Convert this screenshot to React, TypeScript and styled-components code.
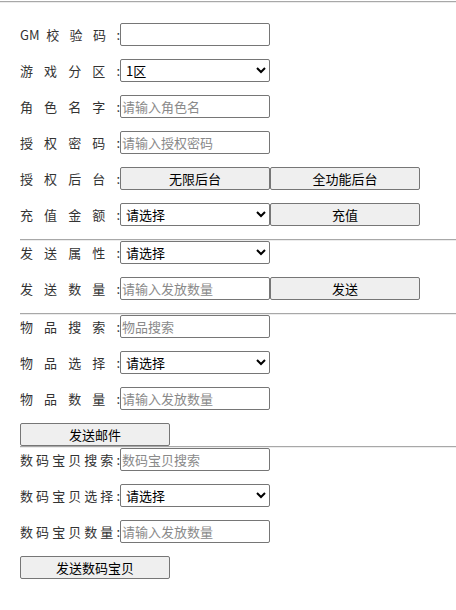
import React from "react";
import styled, { createGlobalStyle } from "styled-components";

const Global = createGlobalStyle`
  html, body { margin: 0; padding: 0; background: #fff; }
  body { font-family: "Microsoft YaHei", "Noto Sans CJK SC", "Noto Sans", sans-serif; font-size: 13px; color: #333; }
`;

const Page = styled.div`
  width: 456px;
  padding-top: 1px;
`;

const Rule = styled.hr<{ $inset?: boolean }>`
  margin: 0 0 0 ${(p) => (p.$inset ? "20px" : "0")};
  height: 0;
  border: 0;
  border-top: 1px solid #a8a8a8;
  border-bottom: 1px solid #ececec;
`;

const Body = styled.div`
  padding: 20px 0 0 0;
`;

const Section = styled.div`
  padding-left: 20px;
  display: flex;
  flex-direction: column;
`;

const Row = styled.div<{ $tight?: boolean }>`
  display: flex;
  align-items: center;
  height: 23px;
  margin-bottom: ${(p) => (p.$tight ? "0" : "13px")};
`;

const Label = styled.label`
  display: inline-block;
  width: 100px;
  text-align: justify;
  text-align-last: justify;
  font-size: 13px;
  line-height: 23px;
  color: #333;
  white-space: nowrap;
`;

const fieldBase = `
  box-sizing: border-box;
  width: 150px;
  height: 23px;
  font-family: "Microsoft YaHei", "Noto Sans CJK SC", sans-serif;
  font-size: 13px;
  border: 1px solid #767676;
  border-radius: 2px;
  margin: 0;
`;

const TextInput = styled.input`
  ${fieldBase}
  padding: 1px 1px;
  color: #000;
  background: #fff;
  &::placeholder { color: #8a8a8a; }
`;

const Select = styled.select`
  ${fieldBase}
  padding: 0 0 0 1px;
  color: #000;
  background-color: #fff;
`;

const Button = styled.button`
  ${fieldBase}
  background: #efefef;
  color: #000;
  padding: 0;
  cursor: pointer;
`;

type Field =
  | { kind: "input"; placeholder?: string }
  | { kind: "select"; options: string[] }
  | { kind: "button"; text: string };

const LabelRow: React.FC<{ label: string; fields: Field[]; tight?: boolean }> = ({ label, fields, tight }) => (
  <Row $tight={tight}>
    <Label>{label}</Label>
    {fields.map((f, i) => {
      if (f.kind === "input") return <TextInput key={i} placeholder={f.placeholder} />;
      if (f.kind === "select")
        return (
          <Select key={i} defaultValue={f.options[0]}>
            {f.options.map((o) => (
              <option key={o}>{o}</option>
            ))}
          </Select>
        );
      return <Button key={i}>{f.text}</Button>;
    })}
  </Row>
);

export default function App() {
  return (
    <Page>
      <Global />
      <Rule />
      <Body>
        <Section>
          <LabelRow label="GM 校 验 码 :" fields={[{ kind: "input" }]} />
          <LabelRow label="游戏分区:" fields={[{ kind: "select", options: ["1区", "2区"] }]} />
          <LabelRow label="角色名字:" fields={[{ kind: "input", placeholder: "请输入角色名" }]} />
          <LabelRow label="授权密码:" fields={[{ kind: "input", placeholder: "请输入授权密码" }]} />
          <LabelRow
            label="授权后台:"
            fields={[
              { kind: "button", text: "无限后台" },
              { kind: "button", text: "全功能后台" },
            ]}
          />
          <LabelRow
            label="充值金额:"
            fields={[
              { kind: "select", options: ["请选择"] },
              { kind: "button", text: "充值" },
            ]}
          />
        </Section>
        <Rule $inset />
        <Section>
          <LabelRow label="发送属性:" fields={[{ kind: "select", options: ["请选择"] }]} />
          <LabelRow
            label="发送数量:"
            fields={[
              { kind: "input", placeholder: "请输入发放数量" },
              { kind: "button", text: "发送" },
            ]}
          />
        </Section>
        <Rule $inset />
        <Section>
          <LabelRow label="物品搜索:" fields={[{ kind: "input", placeholder: "物品搜索" }]} />
          <LabelRow label="物品选择:" fields={[{ kind: "select", options: ["请选择"] }]} />
          <LabelRow label="物品数量:" fields={[{ kind: "input", placeholder: "请输入发放数量" }]} />
          <Row $tight>
            <Button>发送邮件</Button>
          </Row>
        </Section>
        <Rule $inset />
        <Section>
          <LabelRow label="数码宝贝搜索:" fields={[{ kind: "input", placeholder: "数码宝贝搜索" }]} />
          <LabelRow label="数码宝贝选择:" fields={[{ kind: "select", options: ["请选择"] }]} />
          <LabelRow label="数码宝贝数量:" fields={[{ kind: "input", placeholder: "请输入发放数量" }]} />
          <Row>
            <Button>发送数码宝贝</Button>
          </Row>
        </Section>
      </Body>
    </Page>
  );
}
